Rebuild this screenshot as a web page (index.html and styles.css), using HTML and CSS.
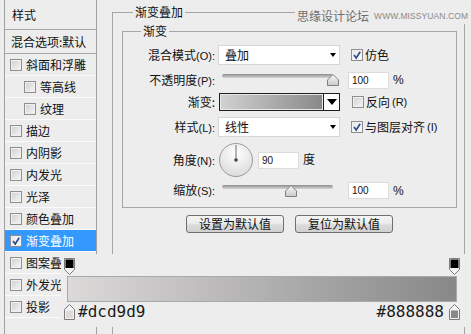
FILE: index.html
```html
<!DOCTYPE html>
<html lang="zh-CN">
<head>
<meta charset="utf-8">
<title>渐变叠加</title>
<link rel="stylesheet" href="styles.css">
</head>
<body>
<div class="page">
  <aside class="styles">
    <div class="styles-head">样式</div>
    <div class="styles-blend">混合选项:默认</div>
    <ul class="fx-list">
      <li class="fx"><span class="cb"></span>斜面和浮雕</li>
      <li class="fx sub"><span class="cb"></span>等高线</li>
      <li class="fx sub"><span class="cb"></span>纹理</li>
      <li class="fx"><span class="cb"></span>描边</li>
      <li class="fx"><span class="cb"></span>内阴影</li>
      <li class="fx"><span class="cb"></span>内发光</li>
      <li class="fx"><span class="cb"></span>光泽</li>
      <li class="fx"><span class="cb"></span>颜色叠加</li>
      <li class="fx active"><span class="cb on"><svg viewBox="0 0 10 10" width="10" height="10"><path d="M2 5 L4.2 8 L8.2 1.8" fill="none" stroke="#2d4c8c" stroke-width="1.7"/></svg></span>渐变叠加</li>
      <li class="fx"><span class="cb"></span>图案叠加</li>
      <li class="fx"><span class="cb"></span>外发光</li>
      <li class="fx"><span class="cb"></span>投影</li>
      <li class="fx"></li>
    </ul>
  </aside>

  <main class="panel">
    <section class="group outer">
      <h2 class="group-title">渐变叠加</h2>
      <section class="group inner">
        <h3 class="group-title">渐变</h3>

        <div class="row r1">
          <label class="lbl">混合模式<span class="key">(O):</span></label>
          <div class="select"><span>叠加</span><i class="arrow"></i></div>
          <div class="check"><span class="cb on"><svg viewBox="0 0 10 10" width="10" height="10"><path d="M2 5 L4.2 8 L8.2 1.8" fill="none" stroke="#2d4c8c" stroke-width="1.7"/></svg></span>仿色</div>
        </div>

        <div class="row r2">
          <label class="lbl">不透明度<span class="key">(P):</span></label>
          <div class="slider"><div class="rail"><div class="track"></div><svg class="thumb" style="left:100%" viewBox="0 0 12 12" width="12" height="12"><defs><linearGradient id="tg1" x1="0" y1="0" x2="0" y2="1"><stop offset="0" stop-color="#fbfbfb"/><stop offset="1" stop-color="#c9c9c9"/></linearGradient></defs><path d="M6 0.5 L11.5 6 V11.5 H0.5 V6 Z" fill="url(#tg1)" stroke="#808080"/></svg></div></div>
          <div class="num">100</div><span class="unit">%</span>
        </div>

        <div class="row r3">
          <label class="lbl">渐变:</label>
          <div class="grad-pick"><div class="swatch"></div><div class="pick-btn"><i class="arrow big"></i></div></div>
          <div class="check"><span class="cb"></span>反向<span class="key">(R)</span></div>
        </div>

        <div class="row r4">
          <label class="lbl">样式<span class="key">(L):</span></label>
          <div class="select"><span>线性</span><i class="arrow"></i></div>
          <div class="check"><span class="cb on"><svg viewBox="0 0 10 10" width="10" height="10"><path d="M2 5 L4.2 8 L8.2 1.8" fill="none" stroke="#2d4c8c" stroke-width="1.7"/></svg></span>与图层对齐<span class="key">(I)</span></div>
        </div>

        <div class="row r5">
          <label class="lbl">角度<span class="key">(N):</span></label>
          <svg class="dial" viewBox="0 0 34 34" width="34" height="34"><defs><radialGradient id="dg" cx="0.5" cy="0.3" r="0.75"><stop offset="0" stop-color="#ffffff"/><stop offset="1" stop-color="#d9d9d9"/></radialGradient></defs><circle cx="17" cy="17" r="16.5" fill="url(#dg)" stroke="#9a9a9a"/><line x1="17" y1="17" x2="17" y2="2" stroke="#6a6a6a" stroke-width="1"/><circle cx="17" cy="17" r="1.8" fill="#444"/></svg>
          <div class="num angle">90</div><span class="unit">度</span>
        </div>

        <div class="row r6">
          <label class="lbl">缩放<span class="key">(S):</span></label>
          <div class="slider"><div class="rail"><div class="track"></div><svg class="thumb" style="left:62%" viewBox="0 0 12 12" width="12" height="12"><defs><linearGradient id="tg2" x1="0" y1="0" x2="0" y2="1"><stop offset="0" stop-color="#fbfbfb"/><stop offset="1" stop-color="#c9c9c9"/></linearGradient></defs><path d="M6 0.5 L11.5 6 V11.5 H0.5 V6 Z" fill="url(#tg2)" stroke="#808080"/></svg></div></div>
          <div class="num">100</div><span class="unit">%</span>
        </div>
      </section>

      <div class="buttons">
        <button class="btn" type="button">设置为默认值</button>
        <button class="btn" type="button">复位为默认值</button>
      </div>
    </section>
  </main>

  <div class="watermark"><span class="wm-cn">思缘设计论坛</span><span class="wm-url">WWW.MISSYUAN.COM</span></div>

  <div class="grad-editor">
    <div class="stops">
      <svg viewBox="0 0 11 17" width="11" height="17"><path d="M0.5 0.5 H10.5 V11.5 L5.5 16.5 L0.5 11.5 Z" fill="#f4f4f4" stroke="#7a7a7a"/><rect x="1.5" y="1.5" width="8" height="8.5" fill="#000"/></svg>
      <svg viewBox="0 0 11 17" width="11" height="17"><path d="M0.5 0.5 H10.5 V11.5 L5.5 16.5 L0.5 11.5 Z" fill="#f4f4f4" stroke="#7a7a7a"/><rect x="1.5" y="1.5" width="8" height="8.5" fill="#000"/></svg>
    </div>
    <div class="bar"></div>
    <div class="stops bottom">
      <div class="stop-l">
        <svg viewBox="0 0 11 16" width="11" height="16"><path d="M0.5 15.5 V5.5 L5.5 0.5 L10.5 5.5 V15.5 Z" fill="#f4f4f4" stroke="#7a7a7a"/><rect x="2" y="6.5" width="7" height="7.5" fill="#dcd9d9"/></svg>
        <span class="hex">#dcd9d9</span>
      </div>
      <div class="stop-r">
        <span class="hex">#888888</span>
        <svg viewBox="0 0 11 16" width="11" height="16"><path d="M0.5 15.5 V5.5 L5.5 0.5 L10.5 5.5 V15.5 Z" fill="#f4f4f4" stroke="#7a7a7a"/><rect x="2" y="6.5" width="7" height="7.5" fill="#888888"/></svg>
      </div>
    </div>
  </div>
</div>
</body>
</html>
```

FILE: styles.css
```css
* { box-sizing: border-box; }

body {
  margin: 0;
  background: #ededed;
  font: 12px/16px "Noto Sans CJK SC", sans-serif;
  color: #111;
}

.page {
  position: relative;
  width: 471px;
  height: 334px;
  overflow: hidden;
  display: flex;
  align-items: flex-start;
}

/* ---------- left style list ---------- */
.styles {
  flex: none;
  width: 93px;
  height: 334px;
  margin-left: 4px;
  border-left: 1px solid #a0a0a0;
  border-right: 1px solid #a0a0a0;
}

.styles-head {
  height: 30px;
  padding-left: 7px;
  line-height: 29px;
  border-bottom: 1px solid #a8a8a8;
}

.styles-blend {
  height: 24px;
  padding-left: 6px;
  line-height: 23px;
  border-bottom: 1px solid #a8a8a8;
  white-space: nowrap;
}

.fx-list {
  list-style: none;
  margin: 0;
  padding: 0;
}

.fx {
  height: 22px;
  display: flex;
  align-items: center;
  gap: 4px;
  padding-left: 5px;
  border-bottom: 1px solid #fbfbfb;
  white-space: nowrap;
  overflow: hidden;
}

.fx.sub { padding-left: 19px; }

.fx.active {
  background: #3399ff;
  color: #fff;
}

.cb {
  flex: none;
  width: 12px;
  height: 12px;
  border: 1px solid #8f8f8f;
  background: linear-gradient(135deg, #cfcfcf, #f6f6f6);
  box-shadow: inset 0 0 0 1px #f0f0f0;
  display: flex;
  align-items: center;
  justify-content: center;
}

.cb.on {
  background: linear-gradient(135deg, #e6e6e6, #ffffff);
}

.key {
  font-family: "Liberation Sans", sans-serif;
  font-size: 11px;
}

/* ---------- right panel ---------- */
.panel {
  flex: none;
  width: 353px;
  margin-left: 15px;
  padding-top: 12px;
}

.group {
  position: relative;
  border: 1px solid #a5a5a5;
}

.group-title {
  position: absolute;
  top: -9px;
  margin: 0;
  padding: 0 2px;
  font-size: 12px;
  font-weight: normal;
  line-height: 16px;
  background: #ededed;
}

.outer {
  height: 340px;
  border-bottom: none;
  padding: 18px 7px 0 9px;
}

.outer > .group-title { left: 20px; }

.inner {
  padding: 13px 0 8px 0;
}

.inner > .group-title { left: 18px; }

.row {
  display: flex;
  align-items: center;
  height: 20px;
  white-space: nowrap;
}

.r2 { margin-top: 5px; }
.r3 { margin-top: 3px; height: 18px; }
.r4 { margin-top: 6px; }
.r5 { margin-top: 6px; height: 34px; }
.r6 { margin-top: 5px; height: 17px; }

.lbl {
  flex: none;
  width: 92px;
  margin-right: 3px;
  text-align: right;
}

.select {
  flex: none;
  width: 122px;
  height: 20px;
  background: #fff;
  border: 1px solid #d6d6d6;
  display: flex;
  align-items: center;
  justify-content: space-between;
  padding: 0 3px 0 6px;
}

.arrow {
  width: 0;
  height: 0;
  border-left: 3.5px solid transparent;
  border-right: 3.5px solid transparent;
  border-top: 4px solid #000;
}

.arrow.big {
  border-left-width: 5px;
  border-right-width: 5px;
  border-top-width: 6px;
}

.check {
  display: flex;
  align-items: center;
  gap: 2px;
  margin-left: 11px;
}

.slider {
  flex: none;
  width: 122px;
  height: 12px;
  padding-left: 4px;
}

.rail {
  position: relative;
  width: 111px;
  height: 12px;
}

.track {
  height: 4px;
  border-radius: 2px;
  background: linear-gradient(#8c8c8c, #b9b9b9 60%, #d5d5d5);
}

.thumb {
  position: absolute;
  top: 0;
  transform: translateX(-50%);
}

.num {
  flex: none;
  width: 41px;
  height: 17px;
  margin-left: 8px;
  padding-left: 3px;
  background: #fff;
  border: 1px solid #dcdcdc;
  font: 10px/15px "Liberation Sans", sans-serif;
}

.num.angle { margin-left: 5px; }

.unit {
  margin-left: 4px;
  font-family: "Liberation Sans", "Noto Sans CJK SC", sans-serif;
}

.grad-pick {
  flex: none;
  width: 121px;
  height: 18px;
  margin: 0 1px 0 1px;
  border: 1px solid #1e1e1e;
  display: flex;
}

.swatch {
  flex: 1;
  background: linear-gradient(to right, #d2d2d2, #888888);
  box-shadow: inset 0 0 0 1px #e8e8e8;
}

.pick-btn {
  flex: none;
  width: 16px;
  border-left: 1px solid #1e1e1e;
  background: #fff;
  display: flex;
  align-items: center;
  justify-content: center;
}

.dial {
  flex: none;
  margin-left: 1px;
}

.buttons {
  display: flex;
  justify-content: center;
  gap: 11px;
  margin-top: 7px;
}

.btn {
  width: 98px;
  height: 18px;
  padding: 0;
  border: 1px solid #707070;
  border-radius: 3px;
  background: linear-gradient(#f4f4f4, #ececec 45%, #dcdcdc 55%, #d0d0d0);
  font: 12px/16px "Noto Sans CJK SC", sans-serif;
  color: #111;
}

/* ---------- watermark ---------- */
.watermark {
  position: absolute;
  left: 295px;
  top: 8px;
  width: 170px;
  padding: 0 2px;
  background: #ededed;
  color: #6e6e6e;
  display: flex;
  align-items: center;
  gap: 5px;
  line-height: 16px;
  white-space: nowrap;
}

.wm-cn, .wm-url { flex: none; }

.wm-url {
  font: 8.5px/16px "Liberation Sans", sans-serif;
  letter-spacing: 0.1px;
  color: #8a8a8a;
}

/* ---------- gradient editor ---------- */
.grad-editor {
  position: absolute;
  left: 61px;
  top: 254px;
  width: 410px;
  height: 73px;
  padding: 4px 0 0 3px;
  background: #ededed;
}

.stops {
  width: 396px;
  display: flex;
  justify-content: space-between;
  align-items: flex-start;
}

.stops svg { display: block; }

.bar {
  width: 390px;
  height: 26px;
  margin: 1px 0 0 3px;
  border: 1px solid #a9a9a9;
  background: linear-gradient(to right, #dcd9d9, #888888);
}

.stops.bottom { margin-top: 2px; }

.stop-l, .stop-r {
  display: flex;
  align-items: center;
}

.stop-l .hex { margin-left: 3px; }
.stop-r .hex { margin-right: 5px; }

.hex {
  font: 16px/16px "DejaVu Sans Mono", monospace;
  color: #1a1a1a;
}
```
